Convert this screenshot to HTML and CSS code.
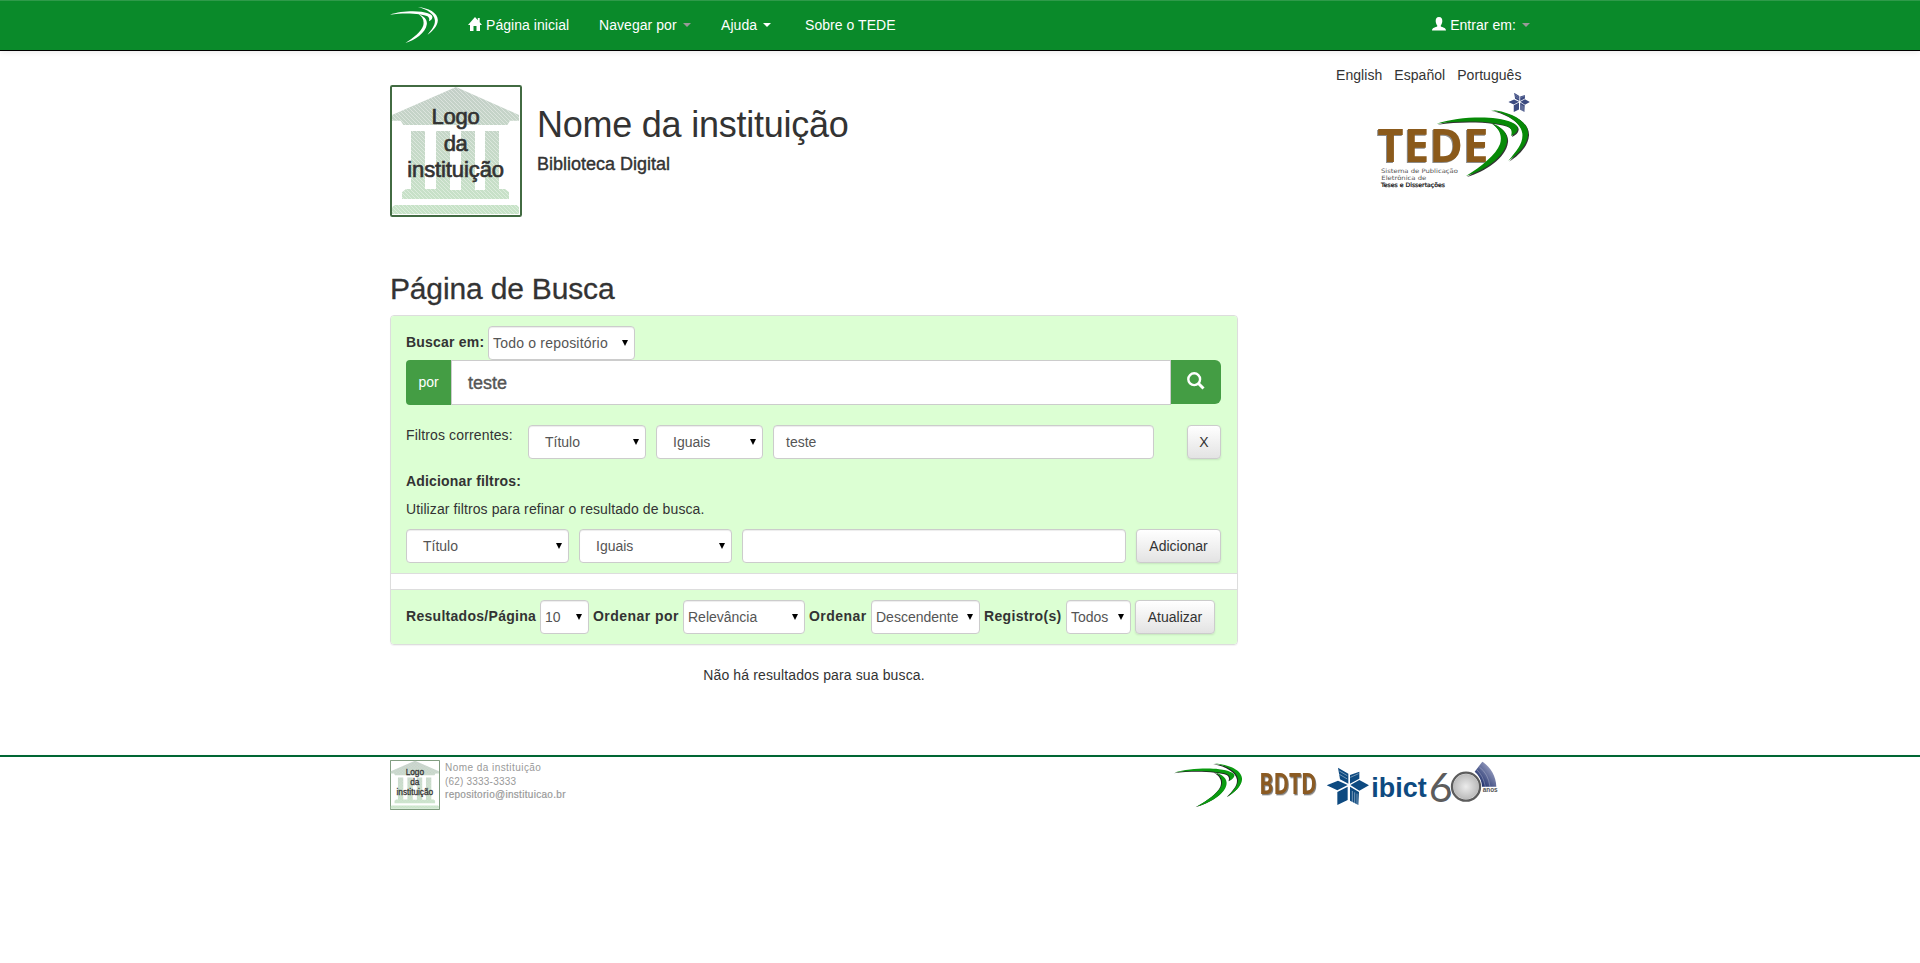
FILE: index.html
```html
<!DOCTYPE html>
<html lang="pt-BR">
<head>
<meta charset="utf-8">
<title>Página de Busca</title>
<link rel="stylesheet" href="styles.css">
</head>
<body>
<svg class="defs" width="0" height="0">
  <defs>
    <linearGradient id="stone" x1="0" y1="36" x2="0" y2="417" gradientUnits="userSpaceOnUse"><stop offset="0" stop-color="#c4cfc8"/><stop offset="1" stop-color="#c8e4c8"/></linearGradient>
    <pattern id="hatch" width="12" height="12" patternUnits="userSpaceOnUse"><path d="M-2 -2L14 14" stroke="#fff" stroke-width="1.8" stroke-opacity=".65"/></pattern>
    <radialGradient id="metal"><stop offset="0" stop-color="#ececec"/><stop offset="1" stop-color="#b4b4b4"/></radialGradient>
    <linearGradient id="fan" x1="0" y1="1" x2="1" y2="0"><stop offset=".2" stop-color="#24346f"/><stop offset="1" stop-color="#c3c6df"/></linearGradient>
    <path id="building" d="M228 36L36 120V137H62L70 150H382L390 137H417V120ZM93 168H135V342H168V168H210V345H243V168H285V345H315V168H357V342H375L387 352V372H66V352L78 342H93ZM44 390H410L417 397V417H36V397Z"/>
    <symbol id="swoosh" viewBox="20 65 275 187" preserveAspectRatio="none">
      <path d="M20 105C70 88 150 84 200 90C240 95 264 106 263 118C262 128 254 134 243 139C247 128 245 119 235 113C205 99 100 93 20 105ZM180 65C240 70 296 95 294 135C292 165 262 192 235 209C260 180 280 160 277 132C273 102 235 77 180 65ZM182 102C215 112 234 132 231 154C225 200 160 237 108 252C155 225 198 192 210 162C218 137 207 117 182 102Z"/>
    </symbol>
    <symbol id="star" viewBox="500 67 128 115" preserveAspectRatio="none">
      <path d="M534 68L565 86V116L540 103ZM598 80L570 90V116L598 101ZM500 121L534 107L563 120L532 136ZM598 105L627 121L598 137L571 120ZM532 141L563 125V165L532 180ZM570 125L597 141L595 180L570 167Z"/>
      <path d="M577 138V182M584 142V182M591 146V182M571 97L596 86M538 78L562 92M538 88L562 102" stroke="#fff" stroke-width="1.300"/>
    </symbol>
    <symbol id="instlogo" viewBox="30 30 396 396">
      <rect x="33" y="33" width="390" height="390" rx="4" fill="#fff" stroke="#426b42" stroke-width="6"/>
      <use href="#building" fill="url(#stone)"/><use href="#building" fill="url(#hatch)"/>
      <g class="inst-text" text-anchor="middle"><text x="227" y="147" textLength="145">Logo</text><text x="227" y="228" textLength="72">da</text><text x="227" y="307" textLength="290">instituição</text></g>
    </symbol>
  </defs>
</svg>

<header class="navbar">
  <nav class="container nav">
    <svg class="brand" width="48" height="36"><use href="#swoosh" fill="#fff"/></svg>
    <a class="home"><svg width="14" height="14" viewBox="0 0 14 14"><path d="M7 0L0 8H2V14H5.500V9H8.500V14H12V8H14L11.700 5.300V1H9.800V3.200Z" fill="#fff"/></svg><span class="t-home">Página inicial</span></a>
    <a class="browse"><span class="t-browse">Navegar por</span><i class="caret dim"></i></a>
    <a class="help"><span class="t-help">Ajuda</span><i class="caret"></i></a>
    <a class="about"><span class="t-about">Sobre o TEDE</span></a>
    <a class="login"><svg width="14" height="14" viewBox="0 0 14 14"><path d="M7 0C4.500 0 3.500 2 3.700 4.500C3.900 6.500 4.500 7.500 5.200 8.300V9.600C4 10.400 0 10.500 0 13.500H14C14 10.500 10 10.400 8.800 9.600V8.300C9.500 7.500 10.100 6.500 10.300 4.500C10.500 2 9.500 0 7 0Z" fill="#fff"/></svg><span class="t-login">Entrar em:</span><i class="caret dim"></i></a>
  </nav>
</header>

<section class="container masthead">
  <svg class="inst" width="132" height="132"><use href="#instlogo"/></svg>
  <div class="names"><h1>Nome da instituição</h1><h4>Biblioteca Digital</h4></div>
  <div class="right">
    <div class="langs"><a>English</a><a>Español</a><a>Português</a></div>
    <svg class="tede" width="156" height="102" viewBox="168 273 468 306">
      <text class="tede-word" x="172" y="486" textLength="334" lengthAdjust="spacingAndGlyphs">TEDE</text>
      <use href="#swoosh" x="353" y="332" width="275" height="199" fill="#333"/>
      <use href="#swoosh" x="350" y="329" width="275" height="199" fill="#078a07"/>
      <use href="#star" x="565" y="278" width="65" height="59" fill="#3b4a80"/>
      <g class="tede-sub"><text x="183" y="518" textLength="231" lengthAdjust="spacingAndGlyphs">Sistema de Publicação</text><text x="184" y="540" textLength="135" lengthAdjust="spacingAndGlyphs">Eletrônica de</text><text class="dark" x="183" y="562" textLength="192" lengthAdjust="spacingAndGlyphs">Teses e Dissertações</text></g>
    </svg>
  </div>
</section>

<main class="container">
  <h2>Página de Busca</h2>
  <div class="panel">
    <div class="search">
      <div class="row scope"><b class="t-scope">Buscar em:</b><span class="select tight w-repo"><span class="t-repo">Todo o repositório</span></span></div>
      <div class="row query"><span class="addon">por</span><span class="q">teste</span><span class="go"><svg width="18" height="18" viewBox="0 0 18 18"><circle cx="7.200" cy="7.200" r="5.900" fill="none" stroke="#fff" stroke-width="2.400"/><path d="M11.500 11.500L16.500 16.500" stroke="#fff" stroke-width="3"/></svg></span></div>
      <div class="row current"><span class="label">Filtros correntes:</span><span class="select w-ct">Título</span><span class="select w-ci">Iguais</span><span class="input">teste</span><span class="btn x">X</span></div>
      <h5>Adicionar filtros:</h5>
      <p>Utilizar filtros para refinar o resultado de busca.</p>
      <div class="row addrow"><span class="select w-at">Título</span><span class="select w-ai">Iguais</span><span class="input"></span><span class="btn add">Adicionar</span></div>
    </div>
    <div class="spacer"></div>
    <div class="sorting">
      <b class="l-rpp">Resultados/Página</b><span class="select tight w-10">10</span>
      <b class="l-sort">Ordenar por</b><span class="select tight w-rel">Relevância</span>
      <b class="l-ord">Ordenar</b><span class="select tight w-desc">Descendente</span>
      <b class="l-reg">Registro(s)</b><span class="select tight w-all">Todos</span>
      <span class="btn upd">Atualizar</span>
    </div>
  </div>
  <p class="empty">Não há resultados para sua busca.</p>
</main>

<footer>
  <div class="container foot">
    <svg width="50" height="50"><use href="#instlogo"/></svg>
    <div class="contact"><span class="org">Nome da instituição</span><span class="phone">(62) 3333-3333</span><span class="mail">repositorio@instituicao.br</span></div>
    <svg class="partners" width="330" height="50" viewBox="42 45 990 150">
      <use href="#swoosh" x="41" y="57" width="203" height="130" fill="#222"/><use href="#swoosh" x="44" y="55" width="203" height="130" fill="#0a9a10"/>
      <text class="bdtd" x="298" y="147" textLength="172" lengthAdjust="spacingAndGlyphs">BDTD</text>
      <use href="#star" x="500" y="67" width="128" height="115" fill="#0e4a80"/>
      <text class="ibict" x="634" y="157" textLength="166" lengthAdjust="spacingAndGlyphs">ibict</text>
      <text class="six" x="806" y="170" textLength="72" lengthAdjust="spacingAndGlyphs">6</text>
      <path d="M967 50C992 66 1008 93 1009 125H964C963 105 958 92 944 80Z" fill="url(#fan)"/>
      <path d="M958 66Q985 86 990 125M950 74Q970 92 976 125" fill="none" stroke="#fff" stroke-opacity=".5" stroke-width="1.500"/>
      <circle cx="918" cy="125" r="43" fill="url(#metal)" stroke="#fff" stroke-width="10"/><circle cx="918" cy="125" r="42" fill="none" stroke="#5c5c5c" stroke-width="7"/>
      <text class="anos" x="968" y="142" textLength="45" lengthAdjust="spacingAndGlyphs">anos</text>
    </svg>
  </div>
</footer>
</body>
</html>
```
FILE: styles.css
```css
*{box-sizing:border-box}
body{margin:0;background:#fff;color:#333;font:14px/20px "Liberation Sans",Arial,sans-serif}
h1,h2,h4,h5,p{margin:0;font-weight:400}
.defs{position:absolute}
.container{width:1140px;margin:0 auto}
span,a,b{white-space:nowrap}
.navbar{height:51px;background:#0a8a2a;border-bottom:1px solid #000;box-shadow:inset 0 1px 0 #2f9a4a,0 1px 6px rgba(0,0,0,.09)}
.nav{display:flex;color:#fff;padding-top:15px;height:50px;letter-spacing:.05px}
.nav a{display:flex;align-items:center;height:20px}
.brand{margin:-8px 30px 0 0;flex:none}
.home{width:131px}
.home span{margin-left:4px}
.home svg{margin-top:-2px}
.browse{width:122px}
.help{width:84px}
.login{margin-left:auto}
.login span{margin-left:4px}
.login svg{margin-top:-2px}
.caret{border:4px solid transparent;border-top-color:#fff;border-bottom:0;margin-left:6px}
.caret.dim{border-top-color:#999}
.masthead{display:flex;height:220px}
.inst{margin-top:34px;flex:none}
.names{padding:54px 0 0 15px}
h1{font-size:36px;line-height:40px;letter-spacing:-.24px}
h4{font-size:18px;line-height:20px;margin-top:9px;-webkit-text-stroke:.4px #333}
.right{margin-left:auto;width:196px;padding-top:14px}
.langs{display:flex;gap:12px;padding-left:2px;letter-spacing:.05px}
.tede{display:block;margin:6px 0 0 42px}
.tede-word{font:bold 138px "Open Sans",sans-serif;fill:#8b5a1b;filter:drop-shadow(-3px 3px 2px rgba(0,0,0,.45))}
.tede-sub{font:18px "DejaVu Sans",sans-serif;fill:#555}
.tede-sub .dark{fill:#111;stroke:#111;stroke-width:.7}
.inst-text{font:66px "Liberation Sans",Arial,sans-serif;fill:#333;stroke:#333;stroke-width:2}
h2{font-size:30px;line-height:33px;margin:1px 0 10px;height:33px;letter-spacing:-.16px;-webkit-text-stroke:.3px #333}
main{height:483px}
.panel{width:848px;border:1px solid #ddd;border-radius:4px;box-shadow:0 1px 1px rgba(0,0,0,.05)}
.search{background:#dcffd3;height:257px;padding:10px 16px 10px 15px;border-radius:3px 3px 0 0}
.row{display:flex}
.scope{height:34px;align-items:center;gap:4px}
.t-scope{width:78px;letter-spacing:.2px;padding-bottom:2px}
.t-repo{letter-spacing:.2px}
.select,.input{display:flex;align-items:center;height:34px;background:#fff;border:1px solid #ccc;border-radius:4px;box-shadow:inset 0 1px 1px rgba(0,0,0,.075);color:#555;flex:none;padding:0 6px 0 16px}
.select::after{content:"";margin-left:auto;border:3px solid transparent;border-top:6px solid #000;border-bottom:0}
.select.tight{padding-left:5px}
.scope .select.tight{padding-left:4px}
.w-repo{width:147px}
.query{height:45px}
.addon{width:45px;background:#449d44;color:#fff;border-radius:4px 0 0 4px;text-align:center;line-height:44px}
.q{flex:1;background:#fff;border:1px solid #ccc;font-size:18px;line-height:44px;padding-left:16px;color:#555;-webkit-text-stroke:.4px #555}
.go{width:50px;height:44px;background:#449d44;border-radius:0 6px 6px 0;padding:12px 16px}
.go svg{display:block}
.current{margin-top:20px;gap:10px}
.label{width:112px;line-height:20px;letter-spacing:.14px}
.w-ct{width:118px}
.w-ci{width:107px}
.input{flex:1;padding-left:12px}
.btn{height:34px;border:1px solid #ccc;border-radius:4px;background:linear-gradient(#fff,#e3e3e3);box-shadow:0 1px 2px rgba(0,0,0,.1);text-align:center;line-height:33px;flex:none;color:#333}
.x{width:34px;margin-left:23px}
h5{font-size:14px;font-weight:700;height:20px;line-height:20px;margin-top:12px;letter-spacing:.17px}
.search p{height:20px;margin:8px 0 10px;letter-spacing:.1px}
.addrow{gap:10px}
.w-at{width:163px}
.w-ai{width:153px}
.add{width:85px}
.spacer{height:17px;border:solid #ddd;border-width:1px 0}
.sorting{display:flex;background:#dcffd3;height:54px;padding:10px 15px;border-radius:0 0 3px 3px}
.sorting b{line-height:32px}
.l-rpp{width:134px;letter-spacing:.29px}
.w-10{width:49px;margin-right:4px}
.l-sort{width:90px;letter-spacing:.45px}
.w-rel{width:122px;margin-right:4px}
.l-ord{width:62px;letter-spacing:.45px}
.w-desc{width:109px;margin-right:4px}
.l-reg{width:82px;letter-spacing:.33px}
.w-all{width:65px;margin-right:4px}
.upd{width:80px}
.sorting .select.tight{padding-left:4px}
.empty{width:848px;text-align:center;margin-top:20px;letter-spacing:.13px}
footer{height:55px;border-top:2px solid #063;box-shadow:0 2px 5px rgba(0,0,0,.07)}
.foot{display:flex;padding-top:3px}
.contact{display:flex;flex-direction:column;padding:1px 0 0 5px;font-size:10px;line-height:13.5px;color:#999}
.org{letter-spacing:.45px}
.phone{letter-spacing:.2px}
.mail{letter-spacing:.3px;-webkit-text-stroke:.2px #999}
.partners{margin:0 26px 0 auto}
.bdtd{font:bold 84px "Open Sans",sans-serif;fill:#8b5a22;filter:drop-shadow(3px 4px 2px rgba(0,0,0,.5))}
.ibict{font:bold 84px "Liberation Sans",sans-serif;fill:#0e4a80}
.six{font:124px Lato,sans-serif;fill:#5c5c5c}
.anos{font:bold 19px "Liberation Sans",sans-serif;fill:#555}
```
